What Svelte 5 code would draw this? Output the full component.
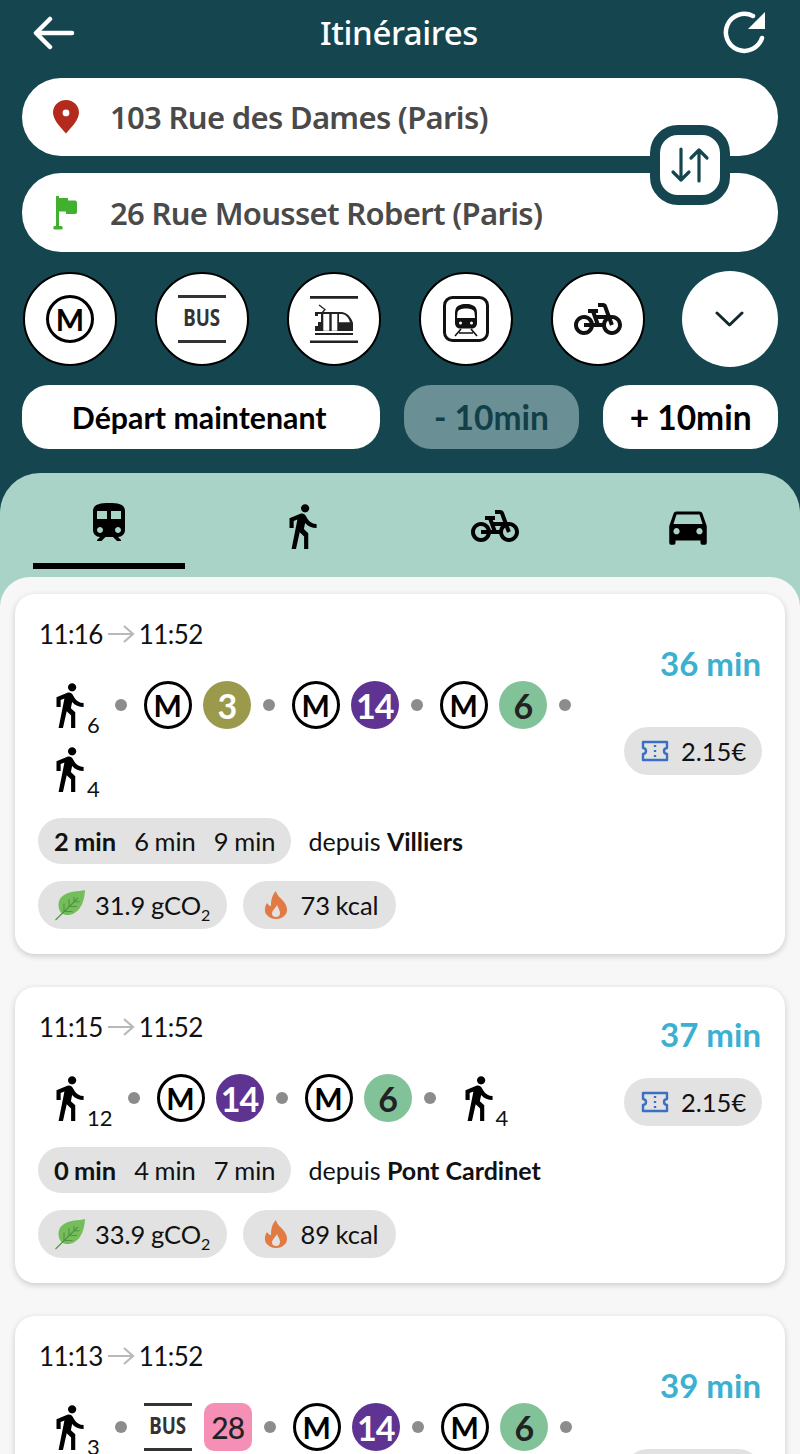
<script>
  const modes = ['metro', 'bus', 'tram', 'rer', 'bike'];

  const cards = [
    {
      dep: '11:16', arr: '11:52', total: '36 min', price: '2.15€',
      route: [
        { k: 'walk', n: '6' }, { k: 'dot' },
        { k: 'metro' }, { k: 'line', n: '3', c: 'olive' }, { k: 'dot' },
        { k: 'metro' }, { k: 'line', n: '14', c: 'purple' }, { k: 'dot' },
        { k: 'metro' }, { k: 'line', n: '6', c: 'green' }, { k: 'dot' },
        { k: 'walk', n: '4' }
      ],
      next: ['2 min', '6 min', '9 min'], from: 'Villiers', co2: '31.9', kcal: '73'
    },
    {
      dep: '11:15', arr: '11:52', total: '37 min', price: '2.15€',
      route: [
        { k: 'walk', n: '12' }, { k: 'dot' },
        { k: 'metro' }, { k: 'line', n: '14', c: 'purple' }, { k: 'dot' },
        { k: 'metro' }, { k: 'line', n: '6', c: 'green' }, { k: 'dot' },
        { k: 'walk', n: '4' }
      ],
      next: ['0 min', '4 min', '7 min'], from: 'Pont Cardinet', co2: '33.9', kcal: '89'
    },
    {
      dep: '11:13', arr: '11:52', total: '39 min', price: '2.15€',
      route: [
        { k: 'walk', n: '3' }, { k: 'dot' },
        { k: 'bus' }, { k: 'line', n: '28', c: 'pink' }, { k: 'dot' },
        { k: 'metro' }, { k: 'line', n: '14', c: 'purple' }, { k: 'dot' },
        { k: 'metro' }, { k: 'line', n: '6', c: 'green' }, { k: 'dot' },
        { k: 'walk', n: '2' }
      ],
      next: ['1 min', '5 min', '8 min'], from: 'Villiers', co2: '35.2', kcal: '64'
    }
  ];

  const walkPath = 'M13.5 5.5c1.1 0 2-.9 2-2s-.9-2-2-2-2 .9-2 2 .9 2 2 2zM9.8 8.9L7 23h2.1l1.8-8 2.1 2v6h2v-7.5l-2.1-2 .6-3C14.8 12 16.8 13 19 13v-2c-1.9 0-3.5-1-4.3-2.4l-1-1.6c-.4-.6-1-1-1.7-1-.3 0-.5.1-.8.1L6 8.3V13h2V9.6l1.8-.7z';
  const bikePath = 'M18.18 10l-1.7-4.68C16.19 4.53 15.44 4 14.6 4H12v2h2.6l1.46 4h-4.81l-.36-1H12V7H7v2h1.75l1.82 5H9.9c-.44-2.23-2.31-3.88-4.65-3.99C2.45 9.87 0 12.2 0 15c0 2.8 2.2 5 5 5 2.46 0 4.45-1.69 4.9-4h4.2c.44 2.23 2.31 3.88 4.65 3.99 2.8.13 5.25-2.19 5.25-5C24 12.2 21.8 10 19 10h-.82zM7.82 16c-.4 1.17-1.49 2-2.82 2-1.68 0-3-1.32-3-3s1.32-3 3-3c1.33 0 2.42.83 2.82 2H5v2h2.82zM14.1 14h-1.4l-.73-2H15c-.44.58-.76 1.25-.9 2zM19 18c-1.68 0-3-1.32-3-3 0-.93.41-1.73 1.05-2.28l.96 2.64 1.88-.68-.97-2.67c.03 0 .06-.01.09-.01 1.68 0 3 1.32 3 3s-1.32 3-3 3z';
  const trainPath = 'M12 2c-4 0-8 .5-8 4v9.5C4 17.43 5.57 19 7.5 19L6 20.5v.5h2.23l2-2H14l2 2h2v-.5L16.5 19c1.93 0 3.5-1.57 3.5-3.5V6c0-3.5-3.58-4-8-4zM7.5 17c-.83 0-1.5-.67-1.5-1.5S6.67 14 7.5 14s1.5.67 1.5 1.5S8.33 17 7.5 17zm3.5-7H6V6h5v4zm2 0V6h5v4h-5zm3.500 7c-.83 0-1.5-.67-1.5-1.5s.67-1.5 1.5-1.5 1.5.67 1.5 1.5-.67 1.5-1.5 1.5z';
  const carPath = 'M18.92 6.01C18.72 5.42 18.16 5 17.5 5h-11c-.66 0-1.21.42-1.42 1.01L3 12v8c0 .55.45 1 1 1h1c.55 0 1-.45 1-1v-1h12v1c0 .55.45 1 1 1h1c.55 0 1-.45 1-1v-8l-2.08-5.99zM6.5 16c-.83 0-1.5-.67-1.5-1.5S5.67 13 6.5 13s1.5.67 1.500 1.5S7.33 16 6.5 16zm11 0c-.83 0-1.5-.67-1.5-1.5s.67-1.5 1.5-1.5 1.5.67 1.5 1.5-.67 1.5-1.5 1.5zM5 11l1.5-4.5h11L19 11H5z';
</script>

{#snippet busMark()}
  <span class="bus-mark"><span>BUS</span></span>
{/snippet}

{#snippet metroMark()}
  <span class="metro-mark">M</span>
{/snippet}

<div class="page">
  <header class="top">
    <div class="titlebar">
      <svg viewBox="0 0 42 34" width="42" height="34" fill="none" stroke="#fff" stroke-width="4.5" stroke-linecap="round" stroke-linejoin="round">
        <path d="M39 17H4M17 3L3 17l14 14" />
      </svg>
      <h1>Itinéraires</h1>
      <svg viewBox="0 0 44 44" width="44" height="44" fill="none">
        <path d="M39 27A18.500 18.500 0 1 1 30 5" stroke="#fff" stroke-width="4.500" stroke-linecap="round" />
        <path d="M42 1v17H25z" fill="#fff" />
      </svg>
    </div>

    <div class="places">
      <div class="place">
        <svg viewBox="0 0 28 34" width="28" height="34">
          <path fill-rule="evenodd" fill="#b42a1c" d="M14 0C6.500 0 1 5.600 1 12.600 1 20 9 28 14 33.500 19 28 27 20 27 12.600 27 5.600 21.500 0 14 0zm0 9.500a3.400 3.400 0 1 1 0 6.800 3.400 3.400 0 0 1 0-6.800z" />
        </svg>
        <span>103 Rue des Dames (Paris)</span>
      </div>
      <div class="place second">
        <svg viewBox="0 0 28 34" width="28" height="34">
          <path fill="#42b02f" d="M4 0h3v2h9v2.500h7a2 2 0 0 1 2 2V16a2 2 0 0 1-2 2h-9v-2.500H7V30h1.500a1.800 1.800 0 1 1 0 3.500h-5a1.800 1.800 0 1 1 0-3.500H4z" />
        </svg>
        <span>26 Rue Mousset Robert (Paris)</span>
      </div>
      <button class="swap" aria-label="Inverser">
        <svg viewBox="0 0 40 36" width="40" height="36" fill="none" stroke="#154650" stroke-width="3.200" stroke-linecap="round" stroke-linejoin="round">
          <path d="M11 2v31M3 25l8 8 8-8M29 34V3M21 11l8-8 8 8" />
        </svg>
      </button>
    </div>

    <div class="modes">
      {#each modes as m}
        <div class="mode">
          {#if m === 'metro'}
            {@render metroMark()}
          {:else if m === 'bus'}
            {@render busMark()}
          {:else if m === 'tram'}
            <svg viewBox="0 0 48 48" width="48" height="48">
              <path d="M0 1h48v2.800H0zM0 45.500h48v2.800H0zM5 38h38v2H5z" fill="#222" />
              <path d="M9 10l6 4.500-4 4.500" fill="none" stroke="#222" stroke-width="1.300" />
              <path fill="#222" d="M5 17h26c6 0 10 5 12 11v8H5v-5h3V21H5z" />
              <path fill="#fff" d="M8 19h3v8H8zM13.300 19h6v16.700h-6zM21.700 19h5.600v16.700h-5.600zM29 19h2.500c3.500 0 7 3 8.500 8.300H29z" />
            </svg>
          {:else if m === 'rer'}
            <svg viewBox="0 0 48 48" width="48" height="48">
              <rect x="2.500" y="2.500" width="43" height="43" rx="8" fill="none" stroke="#111" stroke-width="3" />
              <path fill="#111" d="M24 9c-7 0-11 2.500-11 9v10c0 3 2 5.500 5 5.500h12c3 0 5-2.500 5-5.500V18c0-6.500-4-9-11-9z" />
              <path fill="#fff" d="M15.500 17.500c.5-3 4-4 8.500-4s8 1 8.500 4l.5 5.500H15z" />
              <circle cx="18.500" cy="28" r="1.500" fill="#fff" /><circle cx="29.500" cy="28" r="1.500" fill="#fff" />
              <path d="M19 34l-6 7M29 34l6 7M17 38h14" stroke="#111" stroke-width="1.600" fill="none" />
            </svg>
          {:else}
            <svg viewBox="0 0 24 24" width="48" height="48"><path d={bikePath} fill="#111" /></svg>
          {/if}
        </div>
      {/each}
      <div class="mode more">
        <svg viewBox="0 0 30 18" width="30" height="18" fill="none" stroke="#10292e" stroke-width="3" stroke-linecap="round" stroke-linejoin="round">
          <path d="M2 3l12.500 12L27 3" />
        </svg>
      </div>
    </div>

    <div class="when">
      <button class="time now">Départ maintenant</button>
      <button class="time minus">- 10min</button>
      <button class="time plus">+ 10min</button>
    </div>
  </header>

  <section class="panel">
    <nav class="tabs">
      <div class="tab active"><div class="tab-inner"><svg viewBox="0 0 24 24" width="48" height="48"><path d={trainPath} /></svg></div></div>
      <div class="tab"><div class="tab-inner"><svg viewBox="0 0 24 24" width="50" height="50"><path d={walkPath} /></svg></div></div>
      <div class="tab"><div class="tab-inner"><svg viewBox="0 0 24 24" width="48" height="48"><path d={bikePath} /></svg></div></div>
      <div class="tab"><div class="tab-inner"><svg viewBox="0 0 24 24" width="50" height="50"><path d={carPath} /></svg></div></div>
    </nav>

    <div class="list">
      {#each cards as card}
        <article class="card">
          <div class="head">
            <div class="trip">
              <div class="times">
                <span>{card.dep}</span>
                <svg viewBox="0 0 28 20" width="28" height="20" fill="none" stroke="#b9b9b9" stroke-width="2.200">
                  <path d="M1 10h25M17 2l9 8-9 8" />
                </svg>
                <span>{card.arr}</span>
              </div>
              <div class="route">
                {#each card.route as step}
                  {#if step.k === 'walk'}
                    <div class="walk">
                      <svg viewBox="0 0 24 24" width="50" height="50"><path d={walkPath} /></svg>
                      <span>{step.n}</span>
                    </div>
                  {:else if step.k === 'dot'}
                    <i class="dot"></i>
                  {:else if step.k === 'metro'}
                    {@render metroMark()}
                  {:else if step.k === 'bus'}
                    {@render busMark()}
                  {:else}
                    <span class="line {step.c}">{step.n}</span>
                  {/if}
                {/each}
              </div>
            </div>
            <div class="side">
              <div class="total">{card.total}</div>
              <div class="pill price">
                <svg viewBox="0 0 28 22" width="28" height="22" fill="none" stroke="#3a6fc4" stroke-width="2.400">
                  <path d="M2 2h24v6c-4 .5-4 5.500 0 6v6H2v-6c4-.5 4-5.500 0-6z" stroke-linejoin="round" />
                  <path d="M14 5v2M14 10v2M14 15v2" />
                </svg>
                {card.price}
              </div>
            </div>
          </div>

          <div class="departures">
            <div class="pill next">
              {#each card.next as n, i}
                <span class:first={i === 0}>{n}</span>
              {/each}
            </div>
            <span class="from">depuis <b>{card.from}</b></span>
          </div>

          <div class="eco">
            <div class="pill co2">
              <svg viewBox="0 0 32 32" width="32" height="32">
                <path fill="#74bd5b" d="M31 1c-3 1-7 1-11 1.500C10 4 5 8.500 4.500 15c-.3 4 1 7 3 9 3 2.500 8 3 13 0 7-4 10-13 10.500-23z" />
                <path fill="none" stroke="#4f9440" stroke-width="1.100" d="M1.500 31L24 9M10 22.500v-8M15 17.500V10M20 12.800V8M10 22.500h8.500M15 17.500h8M20 12.800h5.500" />
              </svg>
              <span>{card.co2} gCO<sub>2</sub></span>
            </div>
            <div class="pill kcal">
              <svg viewBox="0 0 24 28" width="24" height="28">
                <path fill-rule="evenodd" fill="#e27a43" d="M12 0c1 5 5 7 8 11 3 4 4 8 2 12-2 3-6 5-10 5S4 26 2 23c-2-4-1-8 1-11 1 1 2 3 4 3 0-6 1-11 5-15zm1 14c-1 3-5 5-5 9 0 2 2 3 4 3s4-1 4-4c0-3-2-5-3-8z" />
              </svg>
              <span>{card.kcal} kcal</span>
            </div>
          </div>
        </article>
      {/each}
    </div>
  </section>
</div>

<style>
  :global(body) {
    margin: 0;
    background: #154650;
  }

  .page {
    width: 800px;
    height: 1454px;
    overflow: hidden;
    display: flex;
    flex-direction: column;
    font-family: Lato, sans-serif;
    color: #111;
  }

  .top {
    background: #154650;
    padding: 0 22px;
    height: 473px;
    box-sizing: border-box;
    flex-shrink: 0;
  }

  .titlebar {
    height: 78px;
    display: flex;
    align-items: center;
    justify-content: space-between;
    padding: 0 11px 12px;
    box-sizing: border-box;
  }

  .titlebar h1 {
    margin: 0 0 2px;
    color: #fff;
    font: 500 33px "Noto Sans", sans-serif;
    letter-spacing: -0.4px;
  }

  .places {
    position: relative;
    display: flex;
    flex-direction: column;
    gap: 17px;
  }

  .place {
    height: 78px;
    background: #fff;
    border-radius: 39px;
    display: flex;
    align-items: center;
    padding-left: 30px;
    gap: 30px;
    font: 600 31px "Noto Sans", sans-serif;
    letter-spacing: -0.68px;
    color: #4a4a4a;
  }

  .place.second {
    height: 79px;
  }

  .swap {
    position: absolute;
    right: 48px;
    top: 47px;
    width: 80px;
    height: 80px;
    box-sizing: border-box;
    background: #fff;
    border: 10px solid #154650;
    border-radius: 28px;
    padding: 0;
    display: flex;
    align-items: center;
    justify-content: center;
  }

  .modes {
    margin-top: 19px;
    display: flex;
    justify-content: space-between;
  }

  .mode {
    width: 94px;
    height: 94px;
    margin: 1px;
    box-sizing: border-box;
    border-radius: 50%;
    background: #fff;
    border: 2px solid #000;
    display: flex;
    align-items: center;
    justify-content: center;
  }

  .mode.more {
    width: 96px;
    height: 96px;
    margin: 0;
    border: none;
  }

  .metro-mark {
    width: 48px;
    height: 48px;
    box-sizing: border-box;
    border: 3px solid #000;
    border-radius: 50%;
    display: flex;
    align-items: center;
    justify-content: center;
    font: 700 30px Lato, sans-serif;
    color: #000;
  }

  .bus-mark {
    width: 48px;
    height: 48px;
    box-sizing: border-box;
    border-top: 3px solid #333;
    border-bottom: 3px solid #333;
    padding-bottom: 5px;
    display: flex;
    align-items: center;
    justify-content: center;
    font: 700 24px "Noto Sans", sans-serif;
    color: #333;
  }

  .bus-mark span {
    display: inline-block;
    transform: scaleX(0.78);
  }

  .when {
    margin-top: 18px;
    display: flex;
    gap: 24px;
  }

  .time {
    height: 64px;
    border: none;
    border-radius: 27px;
    background: #fff;
    padding: 0;
    font: 700 30.3px Lato, sans-serif;
    color: #000;
    white-space: nowrap;
  }

  .time.now {
    width: 358px;
    padding-right: 3px;
  }

  .time.minus {
    width: 176px;
    background: #6a8f95;
    color: #123f48;
    font-size: 33.5px;
  }

  .time.plus {
    width: 175px;
    font-size: 33.5px;
  }

  .panel {
    flex: 1;
    min-height: 0;
    background: #a9d3c7;
    border-radius: 40px 40px 0 0;
    display: flex;
    flex-direction: column;
  }

  .tabs {
    height: 104px;
    flex-shrink: 0;
    display: flex;
    padding: 0 15px 0 12px;
  }

  .tab {
    flex: 1;
    display: flex;
    justify-content: center;
  }

  .tab-inner {
    width: 152px;
    height: 96px;
    padding-top: 10px;
    box-sizing: border-box;
    display: flex;
    align-items: center;
    justify-content: center;
  }

  .tab.active .tab-inner {
    border-bottom: 6px solid #000;
  }

  .list {
    flex: 1;
    background: #f7f7f7;
    border-radius: 30px 30px 0 0;
    padding: 17px 15px;
    display: flex;
    flex-direction: column;
    gap: 33px;
  }

  .card {
    background: #fff;
    border-radius: 20px;
    padding: 24px 23px 25px 23px;
    box-shadow: 0 2px 6px rgba(0, 0, 0, 0.18);
    flex-shrink: 0;
  }

  .head {
    display: flex;
    justify-content: space-between;
  }

  .trip {
    flex: 1;
    min-width: 0;
  }

  .times {
    height: 32px;
    display: flex;
    align-items: center;
    gap: 4px;
    font-size: 26px;
    letter-spacing: -0.6px;
    padding-left: 1px;
  }

  .route {
    margin-top: 31px;
    padding: 0 0 9px 6px;
    display: flex;
    flex-wrap: wrap;
    align-items: center;
    row-gap: 16px;
  }

  .route .metro-mark {
    margin-right: 11px;
  }

  .route .bus-mark {
    margin-right: 12px;
  }

  .walk {
    height: 48px;
    display: flex;
    align-items: center;
  }

  .walk span {
    font-size: 22px;
    align-self: flex-end;
    margin: 0 0 -9px -7px;
  }

  .dot {
    width: 12px;
    height: 12px;
    border-radius: 50%;
    background: #8c8c8c;
    margin: 0 17px 0 12px;
  }

  .walk + .dot {
    margin-left: 15px;
  }

  .line {
    width: 48px;
    height: 48px;
    border-radius: 50%;
    display: flex;
    align-items: center;
    justify-content: center;
    font-size: 34px;
    font-weight: 700;
    letter-spacing: -1px;
  }

  .olive { background: #9b9a4c; color: #fff; }
  .purple { background: #5e3391; color: #fff; }
  .green { background: #82c298; color: #222; }
  .pink { background: #f58fb5; color: #222; border-radius: 10px; font-size: 30px; font-weight: 500; }

  .side {
    flex-shrink: 0;
    display: flex;
    flex-direction: column;
    align-items: flex-end;
    justify-content: space-evenly;
  }

  .total {
    height: 40px;
    line-height: 36px;
    font-size: 33px;
    font-weight: 700;
    color: #3bb0d0;
    margin-right: 1px;
  }

  .pill {
    display: flex;
    align-items: center;
    background: #e2e2e2;
    border-radius: 24px;
    height: 48px;
    font-size: 25.5px;
    word-spacing: -1px;
  }

  .price {
    width: 138px;
    box-sizing: border-box;
    margin-top: 16px;
    padding-left: 17px;
    gap: 12px;
  }

  .departures {
    margin-top: 16px;
    display: flex;
    align-items: center;
    gap: 17px;
  }

  .next {
    height: 46px;
    padding: 0 16px;
    gap: 18px;
  }

  .next .first {
    font-weight: 700;
  }

  .from {
    font-size: 25px;
  }

  .from b {
    font-weight: 700;
  }

  .eco {
    margin-top: 17px;
    display: flex;
    gap: 16px;
  }

  .co2 {
    padding: 0 17px 0 16px;
    gap: 9px;
  }

  .co2 sub {
    font-size: 16px;
    line-height: 0;
  }

  .kcal {
    padding: 0 17px 0 21px;
    gap: 12px;
  }
</style>
